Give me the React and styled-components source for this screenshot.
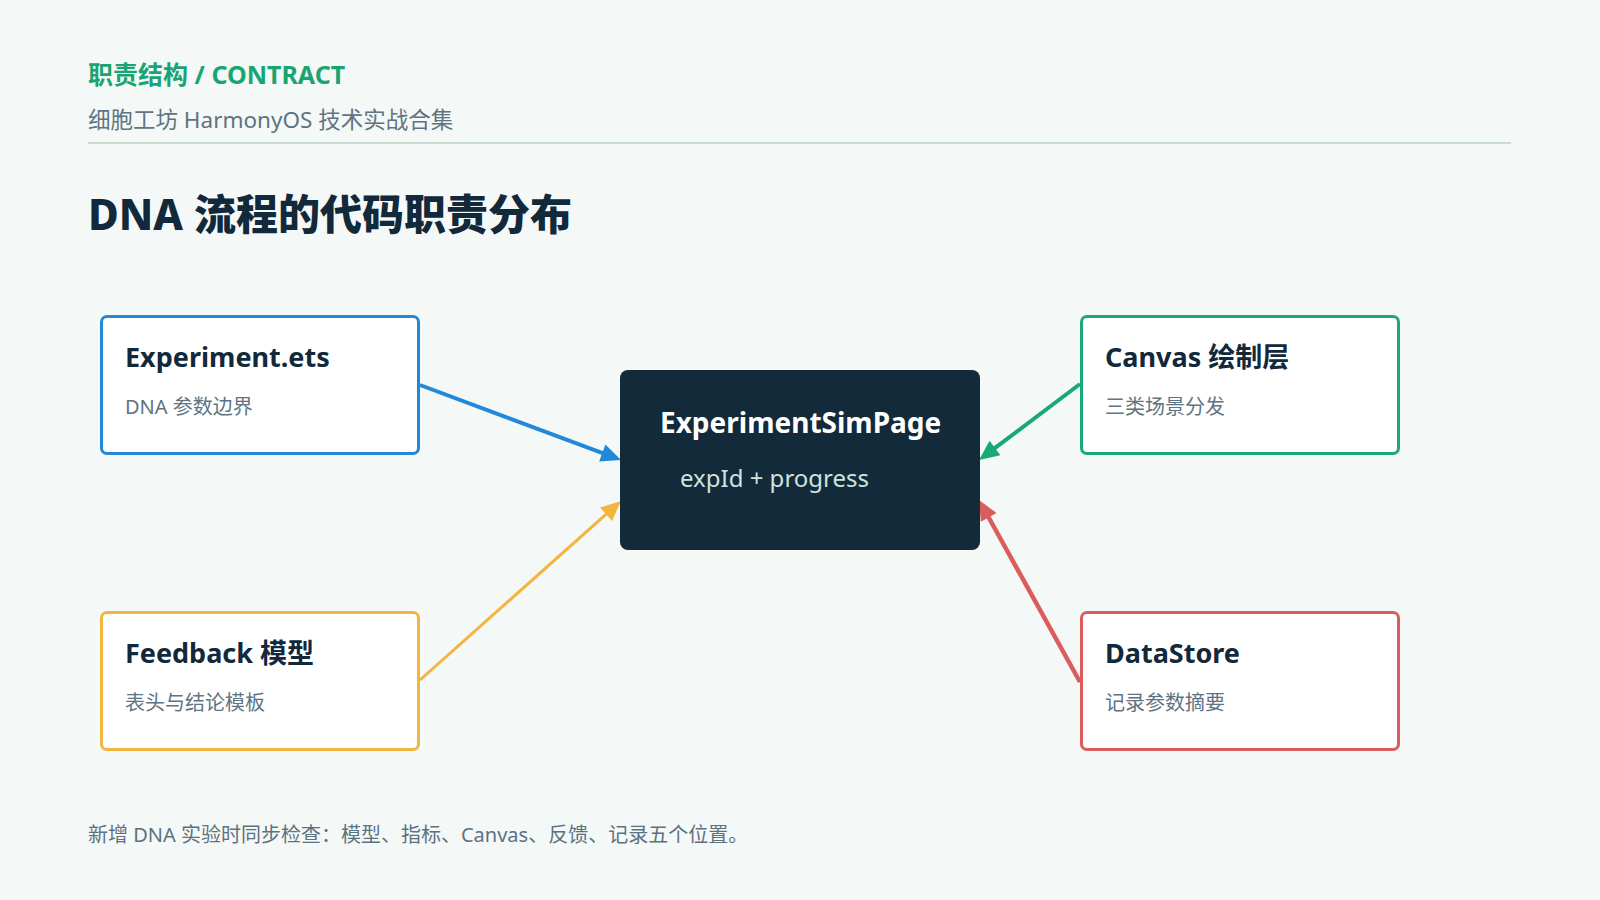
import React from 'react';
import styled, { createGlobalStyle } from 'styled-components';

const GlobalStyle = createGlobalStyle`
  html, body {
    margin: 0;
    padding: 0;
    background: #f4f8f7;
  }
  body {
    font-family: "Noto Sans", "Noto Sans CJK SC", sans-serif;
    color: #11293a;
  }
`;

const Page = styled.div`
  width: 1600px;
  height: 900px;
  box-sizing: border-box;
  padding: 59px 89px 0 88px;
  overflow: hidden;
`;

const Eyebrow = styled.div`
  font-size: 25px;
  line-height: 30px;
  font-weight: 700;
  color: #19a571;
`;

const Deck = styled.div`
  margin-top: 16px;
  font-size: 22.5px;
  line-height: 30px;
  color: #5e7482;
`;

const Divider = styled.div`
  margin-top: 7px;
  height: 2px;
  background: #c9dcd6;
`;

const Title = styled.h1`
  margin: 45px 0 0;
  font-size: 42px;
  line-height: 50px;
  font-weight: 800;
  color: #11293a;
`;

const Diagram = styled.div`
  position: relative;
  margin: 76px 0 0 12px;
  width: 1300px;
  display: grid;
  grid-template-columns: 320px 200px 360px 100px 320px;
  grid-template-rows: 140px 140px;
  row-gap: 156px;
`;

const Wires = styled.svg`
  position: absolute;
  left: 0;
  top: 0;
  width: 1300px;
  height: 436px;
  overflow: visible;
  pointer-events: none;
`;

const Card = styled.div`
  position: relative;
  grid-column: ${(p) => p.$col};
  grid-row: ${(p) => p.$row};
  box-sizing: border-box;
  height: 140px;
  padding: 23px 22px 0;
  background: #ffffff;
  border: 3px solid ${(p) => p.$accent};
  border-radius: 7px;
`;

const CardTitle = styled.div`
  font-size: 27px;
  line-height: 32px;
  font-weight: 700;
  color: #11293a;
  white-space: nowrap;
`;

const CardText = styled.div`
  margin-top: 20px;
  font-size: 20px;
  line-height: 28px;
  color: #5e7482;
`;

const Hub = styled.div`
  position: relative;
  grid-column: 3;
  grid-row: 1 / span 2;
  align-self: start;
  margin-top: 55px;
  height: 180px;
  box-sizing: border-box;
  padding: 35px 0 0 40px;
  background: #122a3a;
  border-radius: 8px;
`;

const HubTitle = styled.div`
  font-size: 28px;
  line-height: 34px;
  font-weight: 700;
  color: #ffffff;
  white-space: nowrap;
`;

const HubText = styled.div`
  margin: 23px 0 0 20px;
  font-size: 24px;
  line-height: 32px;
  color: #cfe3de;
`;

const Footnote = styled.p`
  margin: 70px 0 0;
  font-size: 20px;
  line-height: 28px;
  color: #5c7280;
`;

const cards = [
  { col: 1, row: 1, accent: '#2388d8', title: 'Experiment.ets', text: 'DNA 参数边界' },
  { col: 1, row: 2, accent: '#f3b53f', title: 'Feedback 模型', text: '表头与结论模板' },
  { col: 5, row: 1, accent: '#1aa874', title: 'Canvas 绘制层', text: '三类场景分发' },
  { col: 5, row: 2, accent: '#da5c5c', title: 'DataStore', text: '记录参数摘要' },
];

const arrows = [
  { color: '#2388d8', width: 4, from: [320, 70], to: [521, 145] },
  { color: '#f3b53f', width: 3, from: [320, 365], to: [521, 186] },
  { color: '#1aa874', width: 4, from: [980, 69], to: [879, 145] },
  { color: '#da5c5c', width: 4.5, from: [980, 367], to: [879, 185] },
];

const Arrow = ({ color, width, from, to }) => {
  const [x1, y1] = from;
  const [x2, y2] = to;
  const len = Math.hypot(x2 - x1, y2 - y1);
  const ux = (x2 - x1) / len;
  const uy = (y2 - y1) / len;
  const head = 20;
  const half = 9;
  const bx = x2 - ux * head;
  const by = y2 - uy * head;
  const points = [
    `${x2},${y2}`,
    `${bx - uy * half},${by + ux * half}`,
    `${bx + uy * half},${by - ux * half}`,
  ].join(' ');
  return (
    <g>
      <line
        x1={x1}
        y1={y1}
        x2={x2 - ux * (head - 4)}
        y2={y2 - uy * (head - 4)}
        stroke={color}
        strokeWidth={width}
      />
      <polygon points={points} fill={color} />
    </g>
  );
};

const App = () => (
  <>
    <GlobalStyle />
    <Page>
      <Eyebrow>职责结构 / CONTRACT</Eyebrow>
      <Deck>细胞工坊 HarmonyOS 技术实战合集</Deck>
      <Divider />
      <Title>DNA 流程的代码职责分布</Title>
      <Diagram>
        <Wires viewBox="0 0 1300 436">
          {arrows.map((a) => (
            <Arrow key={a.color} {...a} />
          ))}
        </Wires>
        {cards.map((c) => (
          <Card key={c.title} $col={c.col} $row={c.row} $accent={c.accent}>
            <CardTitle>{c.title}</CardTitle>
            <CardText>{c.text}</CardText>
          </Card>
        ))}
        <Hub>
          <HubTitle>ExperimentSimPage</HubTitle>
          <HubText>expId + progress</HubText>
        </Hub>
      </Diagram>
      <Footnote>新增 DNA 实验时同步检查：模型、指标、Canvas、反馈、记录五个位置。</Footnote>
    </Page>
  </>
);

export default App;
